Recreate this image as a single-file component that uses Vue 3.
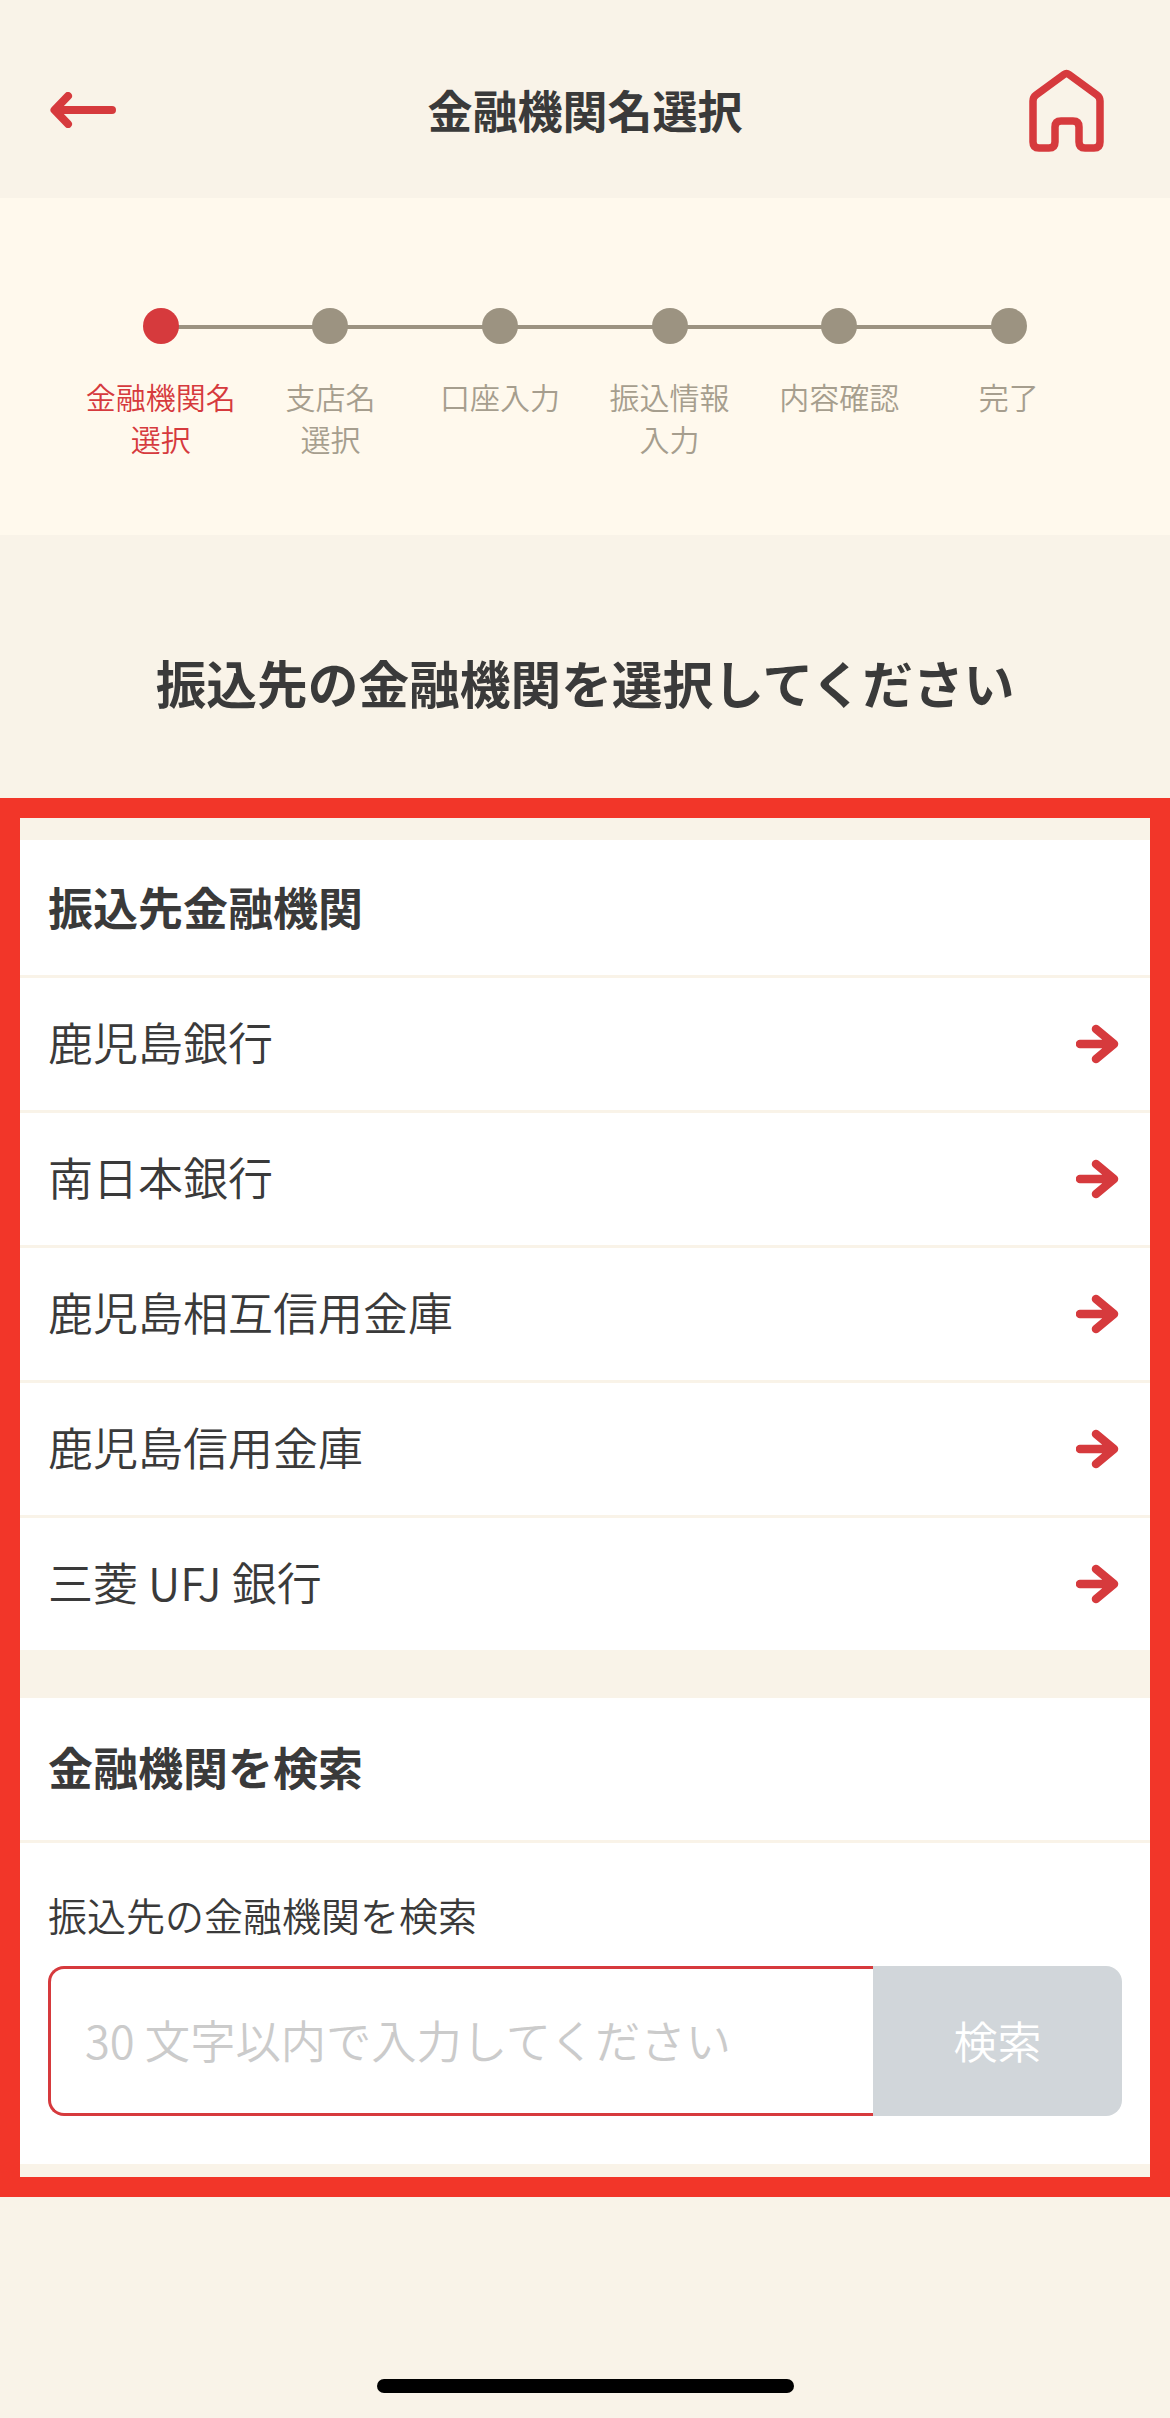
<template>
  <div class="page">
    <header class="top-bar">
      <svg class="back-icon" viewBox="0 0 66 36" fill="none">
        <path d="M62 18H6M18 4 4.5 18 18 32" stroke="#d63a3d" stroke-width="8" stroke-linecap="round" stroke-linejoin="round" />
      </svg>
      <h1>金融機関名選択</h1>
      <svg class="home-icon" viewBox="0 0 75 83" fill="none">
        <path d="M4 32c0-2.500 1-4.500 3-6L35 5.500q2.500-1.800 5 0L68 26c2 1.500 3 3.500 3 6V73c0 4-2 6-6 6H56c-4 0-6-2-6-6V58c0-4-2-6-6-6H32c-4 0-6 2-6 6V73c0 4-2 6-6 6H10c-4 0-6-2-6-6z" stroke="#d63a3d" stroke-width="7.500" stroke-linejoin="round" />
      </svg>
    </header>

    <div class="steps">
      <div v-for="(step, i) in steps" :key="step" :class="['step', { active: i === 0 }]">
        <span class="dot"></span>
        <span class="step-label">{{ step }}</span>
      </div>
    </div>

    <p class="lead">振込先の金融機関を選択してください</p>

    <div class="frame">
      <section class="card">
        <h2>振込先金融機関</h2>
        <div v-for="bank in banks" :key="bank" class="bank-row">
          <span>{{ bank }}</span>
          <svg class="row-arrow" viewBox="0 0 43 40" fill="none">
            <path d="M4 20h32M20 5l18 15-18 15" stroke="#d63a3d" stroke-width="8.500" stroke-linecap="round" stroke-linejoin="round" />
          </svg>
        </div>
      </section>

      <section class="card search-card">
        <h2 class="search-title">金融機関を検索</h2>
        <div class="search-body">
          <label for="bank-search">振込先の金融機関を検索</label>
          <div class="search-box">
            <input id="bank-search" type="text" placeholder="30 文字以内で入力してください" />
            <button type="button">検索</button>
          </div>
        </div>
      </section>
    </div>

    <div class="home-bar"></div>
  </div>
</template>

<script setup>
const steps = ['金融機関名\n選択', '支店名\n選択', '口座入力', '振込情報\n入力', '内容確認', '完了']
const banks = ['鹿児島銀行', '南日本銀行', '鹿児島相互信用金庫', '鹿児島信用金庫', '三菱 UFJ 銀行']
</script>

<style>
html,
body {
  margin: 0;
  background: #f9f3e8;
}
</style>

<style scoped>
.page {
  width: 1170px;
  height: 2418px;
  overflow: hidden;
  background: #f9f3e8;
  color: #3a3a3a;
  font-family: "Noto Sans CJK JP", "Noto Sans", sans-serif;
}

.top-bar {
  height: 198px;
  display: grid;
  grid-template-columns: 1fr auto 1fr;
  align-items: center;
  padding: 22px 50px 0;
  box-sizing: border-box;
}

.top-bar h1 {
  margin: 0;
  font-size: 45px;
  font-weight: 700;
  line-height: 64px;
}

.back-icon {
  width: 66px;
  height: 36px;
}

.home-icon {
  justify-self: end;
  width: 75px;
  height: 83px;
  margin-right: 16px;
}

.steps {
  height: 337px;
  box-sizing: border-box;
  padding: 110px 76px 0;
  display: flex;
  background: #fff9ed;
}

.step {
  position: relative;
  flex: 0 0 169.6px;
  display: flex;
  flex-direction: column;
  align-items: center;
}

.step:not(:last-child)::after {
  content: "";
  position: absolute;
  top: 17px;
  left: 50%;
  width: 100%;
  height: 4px;
  background: #9c9381;
}

.dot {
  position: relative;
  z-index: 1;
  width: 36px;
  height: 36px;
  border-radius: 50%;
  background: #9c9381;
}

.step-label {
  margin-top: 32px;
  white-space: pre-line;
  text-align: center;
  font-size: 30px;
  font-weight: 350;
  line-height: 41.5px;
  color: #a69e8e;
}

.step.active .dot {
  background: #d63a3d;
}

.step.active .step-label {
  color: #d63a3d;
}

.lead {
  margin: 0;
  height: 263px;
  padding-top: 111px;
  box-sizing: border-box;
  text-align: center;
  font-size: 50.7px;
  font-weight: 700;
  line-height: 72px;
}

.frame {
  height: 1399px;
  box-sizing: border-box;
  padding-top: 22px;
  border: 20px solid #f23629;
}

.card {
  background: #fff;
}

.card h2 {
  margin: 0;
  height: 135px;
  padding: 0 0 3px 28px;
  display: flex;
  align-items: center;
  box-sizing: border-box;
  font-size: 45px;
  font-weight: 700;
}

.bank-row {
  height: 135px;
  box-sizing: border-box;
  padding: 0 31px 0 28px;
  display: flex;
  align-items: center;
  justify-content: space-between;
  border-top: 3px solid #f9f3e8;
  font-size: 45px;
  font-weight: 350;
}

.bank-row span {
  padding-bottom: 5px;
}

.row-arrow {
  width: 43px;
  height: 40px;
}

.search-card {
  margin-top: 48px;
}

.card .search-title {
  height: 142px;
  padding-bottom: 6px;
}

.search-body {
  height: 324px;
  box-sizing: border-box;
  padding: 43px 28px 0;
  border-top: 3px solid #f9f3e8;
}

.search-body label {
  display: block;
  font-size: 39px;
  font-weight: 350;
  line-height: 56px;
}

.search-box {
  margin-top: 24px;
  height: 150px;
  display: flex;
}

.search-box input {
  width: 825px;
  height: 150px;
  box-sizing: border-box;
  padding: 0 0 4px 34px;
  border: 3px solid #d63a3d;
  border-right: 0;
  border-radius: 16px 0 0 16px;
  background: #fff;
  font-family: inherit;
  font-size: 45.3px;
  font-weight: 350;
  outline: none;
}

.search-box input::placeholder {
  color: #cbcbcb;
  opacity: 1;
}

.search-box button {
  width: 249px;
  height: 150px;
  padding: 0 0 3px;
  border: 0;
  border-radius: 0 16px 16px 0;
  background: #d1d6da;
  color: #fff;
  font-family: inherit;
  font-size: 44px;
  font-weight: 350;
}

.home-bar {
  width: 417px;
  height: 14px;
  margin: 182px auto 0;
  border-radius: 7px;
  background: #000;
}
</style>
